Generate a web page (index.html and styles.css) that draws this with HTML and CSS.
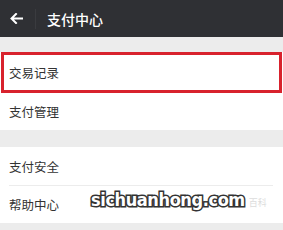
FILE: index.html
```html
<!DOCTYPE html>
<html lang="zh">
<head>
<meta charset="utf-8">
<link rel="stylesheet" href="styles.css">
</head>
<body>
<div class="page">
  <header class="topbar">
    <span class="back">
      <svg width="13" height="11" viewBox="0 0 13 11"><path d="M12 5.5H2M6 1L1.5 5.5L6 10" fill="none" stroke="#ffffff" stroke-width="2" stroke-linecap="square"/></svg>
    </span>
    <span class="sep"></span>
    <span class="title">支付中心</span>
  </header>
  <section class="group first">
    <div class="item marked">交易记录</div>
    <div class="item">支付管理</div>
  </section>
  <section class="group second">
    <div class="item">支付安全</div>
    <div class="item line">帮助中心</div>
  </section>
  <div class="watermark"><span class="mark">sichuanhong.com</span><span class="ghost">百科</span></div>
</div>
</body>
</html>
```
FILE: styles.css
```css
html, body {
  margin: 0;
  padding: 0;
  background: #ececec;
}
.page {
  position: relative;
  width: 283px;
  height: 230px;
  overflow: hidden;
  font-family: "Noto Sans CJK SC", "Noto Sans", sans-serif;
  background: #ececec;
}
.topbar {
  height: 37px;
  background: #2f3034;
  display: flex;
  align-items: center;
  color: #ffffff;
}
.back {
  width: 13px;
  height: 11px;
  margin-left: 10px;
  display: flex;
  margin-top: -1px;
}
.sep {
  width: 1px;
  height: 20px;
  background: #3a3b3f;
  margin-left: 12px;
}
.title {
  margin-left: 11px;
  font-size: 14px;
  font-weight: 500;
  line-height: 1;
}
.group {
  background: #ffffff;
}
.first {
  margin-top: 15px;
}
.second {
  margin-top: 17px;
}
.item {
  height: 38px;
  display: flex;
  align-items: center;
  padding-left: 9px;
  font-size: 12.5px;
  color: #333333;
  box-sizing: border-box;
}
.item.marked {
  height: 41px;
  margin: 0 1px;
  padding-left: 5px;
  border: 3px solid #d8222d;
}
.first .item:last-child {
  height: 37px;
}
.item.line {
  position: relative;
}
.item.line::before {
  content: "";
  position: absolute;
  left: 9px;
  right: 10px;
  top: 0;
  height: 1px;
  background: #ececec;
}
.watermark {
  position: absolute;
  left: 91px;
  top: 189px;
  display: flex;
  align-items: center;
  white-space: nowrap;
}
.mark {
  font-family: "DejaVu Sans Condensed", "DejaVu Sans", sans-serif;
  font-stretch: condensed;
  font-weight: bold;
  font-size: 18px;
  letter-spacing: -0.4px;
  color: #ffffff;
  -webkit-text-stroke: 3px #333333;
  paint-order: stroke fill;
}
.ghost {
  font-size: 9px;
  color: #dcdcdc;
  margin-left: 4px;
  margin-top: 6px;
}
```
